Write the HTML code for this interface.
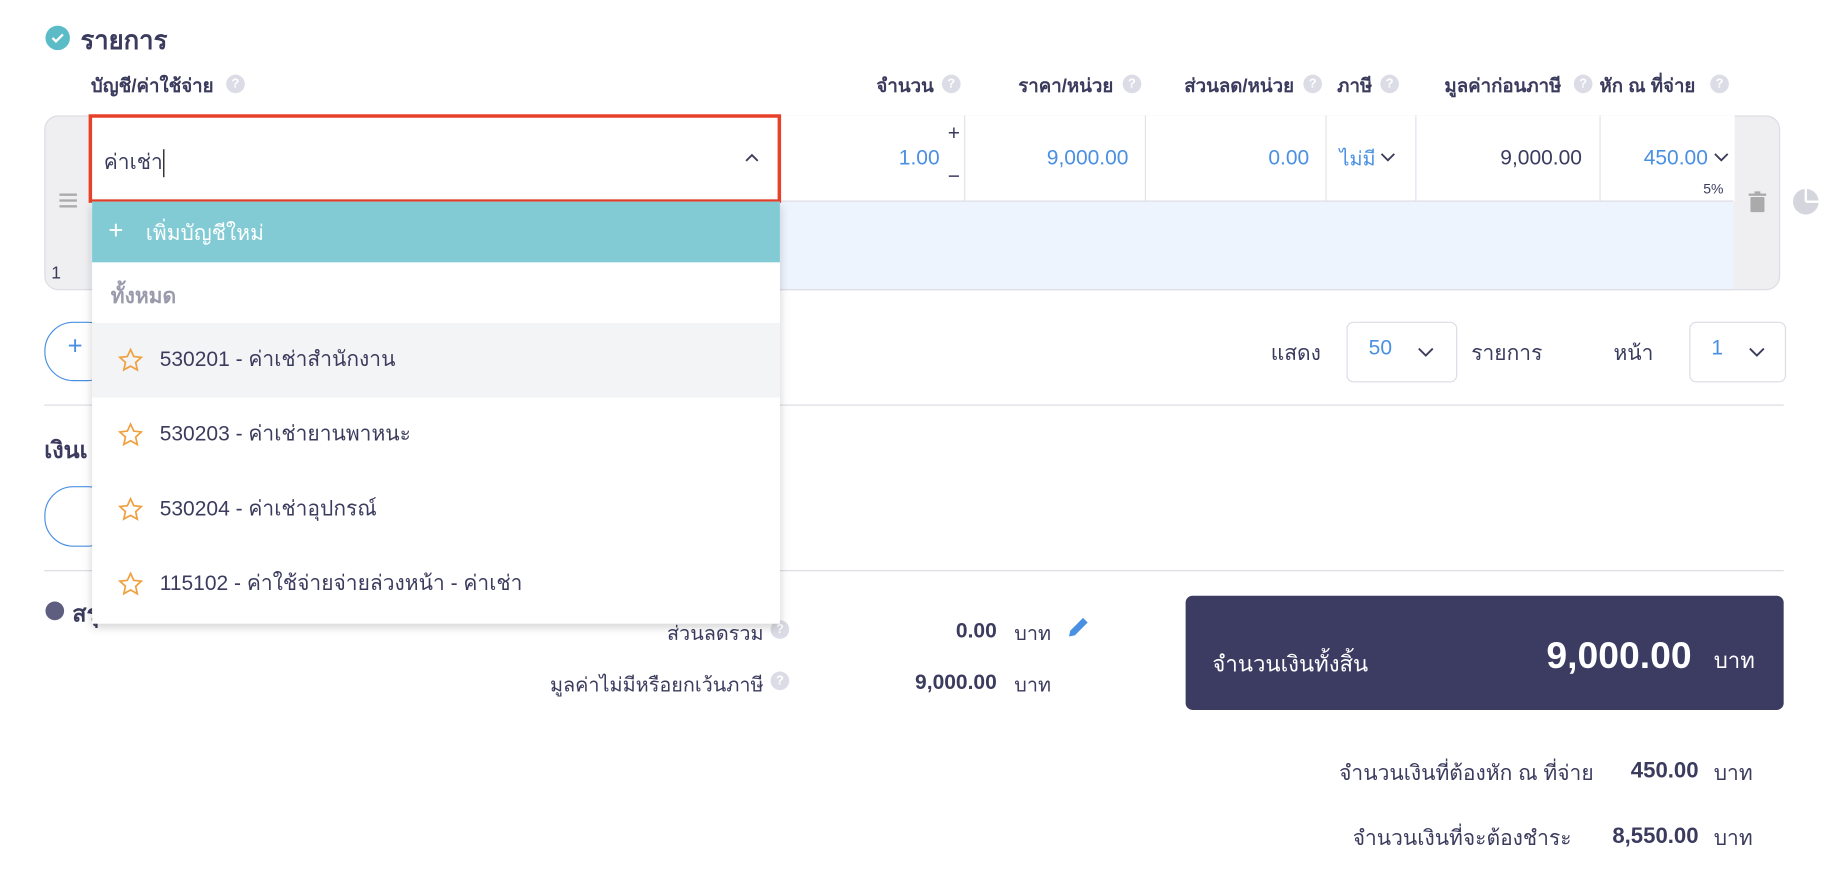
<!DOCTYPE html>
<html><head><meta charset="utf-8"><style>
html,body{margin:0;padding:0;background:#fff;overflow:hidden}
#w{position:relative;width:1568px;height:750px;transform:scale(1.1658);transform-origin:0 0;font-family:"Liberation Sans","Noto Sans CJK SC",sans-serif;color:#3b3b5e}
.a{position:absolute;white-space:nowrap}
.q{position:absolute;width:16px;height:16px;border-radius:50%;background:#dcdce6;color:#fff;font-size:11px;line-height:16px;text-align:center;font-weight:bold}
.h{font-size:16px;font-weight:600;top:62px}
.r{text-align:right}
.blue{color:#4a90e2}
.cell{position:absolute;top:99px;height:74px;border-left:1px solid #e2e2ea;background:#fff}
.it{position:absolute;left:0;width:590px;height:64px}
.it span{position:absolute;left:58px;top:16px;font-size:18px}
.it svg{position:absolute;left:22px;top:21px}
.sel{position:absolute;border:1px solid #dcdce6;border-radius:6px;height:50px;top:276px;background:#fff}
</style></head><body><div id="w">
<svg class="a" style="left:39px;top:22px" width="21" height="21"><circle cx="10.5" cy="10.5" r="10.5" fill="#5bbcc7"/><path d="M6 10.5l3 3 6-6" stroke="#fff" stroke-width="2" fill="none"/></svg>
<div class="a" style="left:69px;top:17px;font-size:22px;font-weight:bold">รายการ</div>
<div class="a h" style="left:78px">บัญชี/ค่าใช้จ่าย</div><div class="q" style="left:194px;top:64px">?</div>
<div class="a h r" style="right:767px">จำนวน</div><div class="q" style="left:808px;top:64px">?</div>
<div class="a h r" style="right:613px">ราคา/หน่วย</div><div class="q" style="left:963px;top:64px">?</div>
<div class="a h r" style="right:458px">ส่วนลด/หน่วย</div><div class="q" style="left:1118px;top:64px">?</div>
<div class="a h" style="left:1147px">ภาษี</div><div class="q" style="left:1184px;top:64px">?</div>
<div class="a h" style="left:1239px">มูลค่าก่อนภาษี</div><div class="q" style="left:1350px;top:64px">?</div>
<div class="a h" style="left:1372px">หัก ณ ที่จ่าย</div><div class="q" style="left:1467px;top:64px">?</div>

<div class="a" style="left:38px;top:99px;width:1487px;height:148px;border:1px solid #dcdce4;border-radius:12px;background:#efeff1"></div>
<div class="a" style="left:78px;top:173px;width:1409px;height:75px;background:#edf4fe;border-bottom:1px solid #dcdce4"></div>
<div class="cell" style="left:669px;width:158px"></div>
<div class="cell" style="left:827px;width:155px"></div>
<div class="cell" style="left:982px;width:155px"></div>
<div class="cell" style="left:1137px;width:77px"></div>
<div class="cell" style="left:1214px;width:158px"></div>
<div class="cell" style="left:1372px;width:115px"></div>
<div class="a" style="left:669px;top:172px;width:818px;border-top:1px solid #dcdce4"></div>
<div class="a" style="left:76px;top:98px;width:588px;height:70px;border:3px solid #e8412a;background:#fff"></div>
<div class="a" style="left:89px;top:124px;font-size:18px">ค่าเช่า<span style="display:inline-block;width:1px;height:24px;background:#000;vertical-align:middle"></span></div>
<svg class="a" style="left:638px;top:130px" width="14" height="10"><path d="M2 8l5-5 5 5" stroke="#3b3b5e" stroke-width="1.6" fill="none"/></svg>
<div class="a" style="left:51px;top:166px;width:15px;height:2px;background:#aaa;box-shadow:0 5px 0 #aaa,0 10px 0 #aaa"></div>
<div class="a" style="left:44px;top:226px;font-size:15px">1</div>
<div class="a r blue" style="right:762px;top:125px;font-size:18px">1.00</div>
<div class="a" style="left:813px;top:104px;font-size:18px">+</div><div class="a" style="left:813px;top:141px;font-size:18px">−</div>
<div class="a r blue" style="right:600px;top:125px;font-size:18px">9,000.00</div>
<div class="a r blue" style="right:445px;top:125px;font-size:18px">0.00</div>
<div class="a blue" style="left:1149px;top:123px;font-size:17px">ไม่มี</div>
<svg class="a" style="left:1184px;top:131px" width="13" height="9"><path d="M1 1l5.5 5.5 5.5-5.5" stroke="#3b3b5e" stroke-width="1.6" fill="none"/></svg>
<div class="a r" style="right:211px;top:125px;font-size:18px">9,000.00</div>
<div class="a r blue" style="right:103px;top:125px;font-size:18px">450.00</div>
<svg class="a" style="left:1470px;top:131px" width="13" height="9"><path d="M1 1l5.5 5.5 5.5-5.5" stroke="#3b3b5e" stroke-width="1.6" fill="none"/></svg>
<div class="a" style="left:1461px;top:155px;font-size:12px">5%</div>
<svg class="a" style="left:1499px;top:164px" width="17" height="19"><rect x="1" y="2" width="15" height="2" fill="#aaa"/><rect x="6" y="0" width="5" height="3" fill="#aaa"/><rect x="2.5" y="5" width="12" height="13" rx="1" fill="#aaa"/></svg>
<svg class="a" style="left:1538px;top:162px" width="22" height="22"><circle cx="11" cy="11" r="11" fill="#d5d5de"/><path d="M11 11V0M11 11H22" stroke="#fff" stroke-width="2"/></svg>

<div class="a" style="left:38px;top:276px;width:60px;height:49px;border:1px solid #4a90e2;border-radius:25px"></div>
<div class="a blue" style="left:58px;top:284px;font-size:22px">+</div>
<div class="a" style="left:1090px;top:288px;font-size:18px">แสดง</div>
<div class="sel" style="left:1155px;width:93px"><span class="a blue" style="left:18px;top:11px;font-size:18px">50</span><svg class="a" style="left:60px;top:21px" width="14" height="9"><path d="M1 1l6 6 6-6" stroke="#3b3b5e" stroke-width="1.6" fill="none"/></svg></div>
<div class="a" style="left:1262px;top:288px;font-size:18px">รายการ</div>
<div class="a" style="left:1384px;top:288px;font-size:18px">หน้า</div>
<div class="sel" style="left:1449px;width:81px"><span class="a blue" style="left:18px;top:11px;font-size:18px">1</span><svg class="a" style="left:50px;top:21px" width="14" height="9"><path d="M1 1l6 6 6-6" stroke="#3b3b5e" stroke-width="1.6" fill="none"/></svg></div>
<div class="a" style="left:38px;top:347px;width:1492px;border-top:1px solid #dcdce4"></div>
<div class="a" style="left:38px;top:370px;font-size:20px;font-weight:bold">เงินเ</div>
<div class="a" style="left:38px;top:417px;width:60px;height:50px;border:1px solid #4a90e2;border-radius:25px"></div>
<div class="a" style="left:38px;top:489px;width:1492px;border-top:1px solid #dcdce4"></div>
<div class="a" style="left:39px;top:516px;width:16px;height:16px;border-radius:50%;background:#5e5e80"></div>
<div class="a" style="left:62px;top:510px;font-size:20px;font-weight:bold">สรุป</div>

<div class="a r" style="right:913px;top:530px;font-size:17px">ส่วนลดรวม</div><div class="q" style="left:661px;top:532px">?</div>
<div class="a r" style="right:713px;top:531px;font-size:18px;font-weight:bold">0.00</div>
<div class="a" style="left:870px;top:530px;font-size:17px">บาท</div>
<svg class="a" style="left:914px;top:527px" width="22" height="22"><path d="M3 19l1-5L15 3l4 4L8 18z" fill="#4a90e2"/></svg>
<div class="a r" style="right:913px;top:574px;font-size:17px">มูลค่าไม่มีหรือยกเว้นภาษี</div><div class="q" style="left:661px;top:576px">?</div>
<div class="a r" style="right:713px;top:575px;font-size:18px;font-weight:bold">9,000.00</div>
<div class="a" style="left:870px;top:574px;font-size:17px">บาท</div>
<div class="a" style="left:1017px;top:511px;width:513px;height:98px;background:#3c3c63;border-radius:6px"></div>
<div class="a" style="left:1040px;top:555px;font-size:19px;color:#fff">จำนวนเงินทั้งสิ้น</div>
<div class="a r" style="right:117px;top:544px;font-size:32px;font-weight:bold;color:#fff">9,000.00</div>
<div class="a" style="left:1470px;top:552px;font-size:19px;color:#fff">บาท</div>
<div class="a r" style="right:201px;top:648px;font-size:18px">จำนวนเงินที่ต้องหัก ณ ที่จ่าย</div>
<div class="a r" style="right:111px;top:651px;font-size:19px;font-weight:bold">450.00</div>
<div class="a" style="left:1470px;top:648px;font-size:18px">บาท</div>
<div class="a r" style="right:220px;top:704px;font-size:18px">จำนวนเงินที่จะต้องชำระ</div>
<div class="a r" style="right:111px;top:707px;font-size:19px;font-weight:bold">8,550.00</div>
<div class="a" style="left:1470px;top:704px;font-size:18px">บาท</div>

<div class="a" style="left:79px;top:173px;width:590px;height:362px;background:#fff;box-shadow:0 3px 8px rgba(0,0,0,.18)">
<div class="it" style="top:0;height:52px;background:#82cbd4;color:#fff"><span style="left:14px;top:12px;font-size:22px">+</span><span style="left:46px;top:12px">เพิ่มบัญชีใหม่</span></div>
<div class="a" style="left:16px;top:66px;font-size:18px;font-weight:bold;color:#9a9aac">ทั้งหมด</div>
<div class="it" style="top:104px;background:#f3f4f6"><svg width="22" height="22" viewBox="0 0 24 24"><path d="M12 2l3 6.5 7 .8-5.2 4.8 1.5 7L12 17.5 5.7 21l1.5-7L2 9.3l7-.8z" fill="none" stroke="#f0a040" stroke-width="1.6"/></svg><span>530201 - ค่าเช่าสำนักงาน</span></div>
<div class="it" style="top:168px"><svg width="22" height="22" viewBox="0 0 24 24"><path d="M12 2l3 6.5 7 .8-5.2 4.8 1.5 7L12 17.5 5.7 21l1.5-7L2 9.3l7-.8z" fill="none" stroke="#f0a040" stroke-width="1.6"/></svg><span>530203 - ค่าเช่ายานพาหนะ</span></div>
<div class="it" style="top:232px"><svg width="22" height="22" viewBox="0 0 24 24"><path d="M12 2l3 6.5 7 .8-5.2 4.8 1.5 7L12 17.5 5.7 21l1.5-7L2 9.3l7-.8z" fill="none" stroke="#f0a040" stroke-width="1.6"/></svg><span>530204 - ค่าเช่าอุปกรณ์</span></div>
<div class="it" style="top:296px"><svg width="22" height="22" viewBox="0 0 24 24"><path d="M12 2l3 6.5 7 .8-5.2 4.8 1.5 7L12 17.5 5.7 21l1.5-7L2 9.3l7-.8z" fill="none" stroke="#f0a040" stroke-width="1.6"/></svg><span>115102 - ค่าใช้จ่ายจ่ายล่วงหน้า - ค่าเช่า</span></div>
</div>
</div></body></html>
